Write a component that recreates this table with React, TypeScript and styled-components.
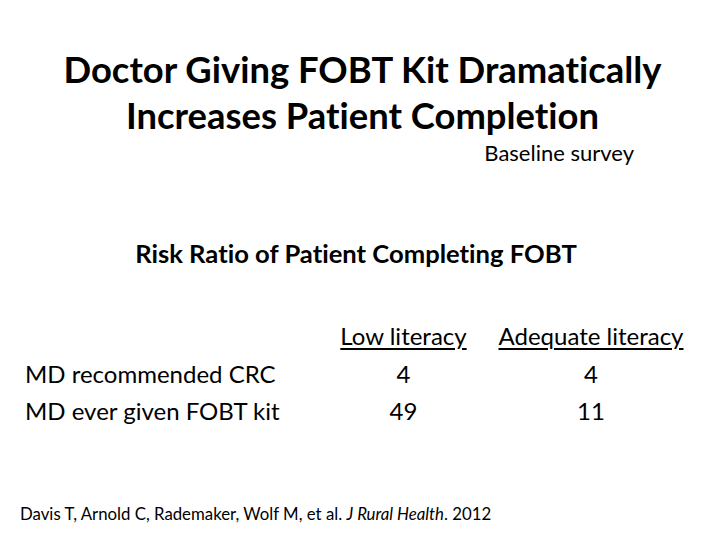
import { FunctionComponent, Fragment } from "react";
import styled, { createGlobalStyle } from "styled-components";

const GlobalStyle = createGlobalStyle`
  html, body {
    margin: 0;
    padding: 0;
    background: #ffffff;
  }
`;

type Row = { label: string; low: string; adequate: string };

const rows: Row[] = [
  { label: "MD recommended CRC", low: "4", adequate: "4" },
  { label: "MD ever given FOBT kit", low: "49", adequate: "11" },
];

const App: FunctionComponent = () => {
  return (
    <Slide>
      <GlobalStyle />
      {/* 제목 */}
      <Title>
        Doctor Giving FOBT Kit Dramatically
        <br />
        Increases Patient Completion
      </Title>
      <Subtitle>Baseline survey</Subtitle>

      <SectionHeading>Risk Ratio of Patient Completing FOBT</SectionHeading>

      {/* 표 */}
      <Table>
        <div />
        <HeaderCell>Low literacy</HeaderCell>
        <HeaderCell>Adequate literacy</HeaderCell>
        {rows.map((r) => (
          <Fragment key={r.label}>
            <div>{r.label}</div>
            <ValueCell>{r.low}</ValueCell>
            <ValueCell>{r.adequate}</ValueCell>
          </Fragment>
        ))}
      </Table>

      <Citation>
        Davis T, Arnold C, Rademaker, Wolf M, et al. <em>J Rural Health</em>. 2012
      </Citation>
    </Slide>
  );
};

export default App;

const Slide = styled.div`
  width: 720px;
  height: 540px;
  box-sizing: border-box;
  padding: 46px 0 0;
  display: flex;
  flex-direction: column;
  font-family: Lato, "Open Sans", sans-serif;
  font-variant-ligatures: none;
  color: #000;
  overflow: hidden;
`;

const Title = styled.h1`
  margin: 0;
  padding-left: 5px;
  font-size: 36.4px;
  line-height: 46px;
  font-weight: 700;
  text-align: center;
`;

const Subtitle = styled.div`
  align-self: flex-end;
  margin: 2px 86px 0 0;
  font-size: 22px;
  line-height: 26px;
`;

const SectionHeading = styled.h2`
  margin: 72px 0 0;
  padding-right: 8px;
  font-size: 25.6px;
  line-height: 30px;
  font-weight: 700;
  text-align: center;
`;

const Table = styled.div`
  margin: 49px 0 0 25px;
  display: grid;
  grid-template-columns: 300px 157px 218px;
  font-size: 24px;
  line-height: 37.5px;
`;

const HeaderCell = styled.div`
  text-align: center;
  white-space: nowrap;
  text-decoration: underline;
  text-underline-offset: 3px;
  text-decoration-thickness: 2px;
`;

const ValueCell = styled.div`
  text-align: center;
`;

const Citation = styled.div`
  margin: 74px 0 0 20px;
  font-size: 16.8px;
  line-height: 20px;

  em {
    font-style: italic;
  }
`;
